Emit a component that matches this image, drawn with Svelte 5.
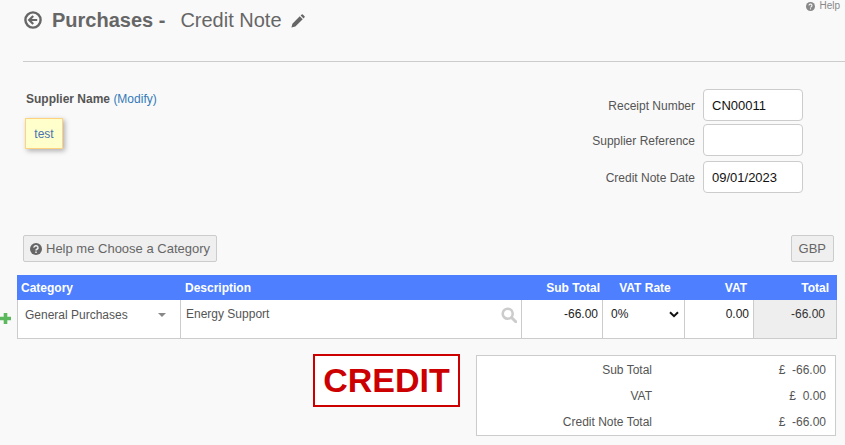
<script>
  const rows = [
    { label: 'Sub Total', value: '£  -66.00' },
    { label: 'VAT', value: '£  0.00' },
    { label: 'Credit Note Total', value: '£  -66.00' }
  ];
</script>

<div class="page">
  <a class="help" href="#help">
    <svg viewBox="0 0 16 16" width="9" height="9"><circle cx="8" cy="8" r="8" fill="#888"/><path d="M5.4 6.2a2.6 2.4 0 1 1 3.9 2.1c-.9.5-1.3.9-1.3 1.7" fill="none" stroke="#f9f9f9" stroke-width="2"/><rect x="7" y="11.2" width="2" height="2" fill="#f9f9f9"/></svg>
    Help
  </a>

  <header class="head">
    <svg class="back" viewBox="0 0 18 18" width="18" height="18">
      <circle cx="9" cy="9" r="7.6" fill="none" stroke="#666" stroke-width="2.4"/>
      <path d="M9.2 5 5.2 9l4 4M5.600 9h7.600" fill="none" stroke="#666" stroke-width="2.2"/>
    </svg>
    <h1>Purchases -</h1>
    <h2>Credit Note</h2>
    <svg class="pen" viewBox="0 0 16 16" width="14" height="14">
      <path d="M0.5 15.5 1.6 11 10 2.6 13.4 6 5 14.4Z M11 1.6 12.2.5a1 1 0 0 1 1.3 0l2 2a1 1 0 0 1 0 1.3L14.400 5Z" fill="#666"/>
    </svg>
  </header>

  <section class="info">
    <div class="supplier">
      <div class="sup-label"><b>Supplier Name</b> <a href="#modify">(Modify)</a></div>
      <div class="note">test</div>
    </div>
    <div class="fields">
      <label class="f1"><span>Receipt Number</span><input value="CN00011" /></label>
      <label class="f2"><span>Supplier Reference</span><input value="" /></label>
      <label class="f3"><span>Credit Note Date</span><input value="09/01/2023" /></label>
    </div>
  </section>

  <div class="tools">
    <button class="btn">
      <svg viewBox="0 0 16 16" width="12" height="12"><circle cx="8" cy="8" r="8" fill="#666"/><path d="M5.300 6.200a2.700 2.500 0 1 1 4 2.100c-.9.500-1.300.9-1.300 1.700" fill="none" stroke="#f0f0f0" stroke-width="2"/><rect x="7" y="11.300" width="2" height="2" fill="#f0f0f0"/></svg>
      Help me Choose a Category
    </button>
    <button class="btn gbp">GBP</button>
  </div>

  <div class="table-wrap">
    <svg class="plus" viewBox="0 0 11 11" width="11" height="11"><path d="M3.700 0h3.600v3.700H11v3.600H7.300V11H3.700V7.300H0V3.700h3.700Z" fill="#5cb85c"/></svg>
    <div class="grid thead">
      <div>Category</div>
      <div>Description</div>
      <div class="r h-sub">Sub Total</div>
      <div class="c">VAT Rate</div>
      <div class="r h-vat">VAT</div>
      <div class="r h-total">Total</div>
    </div>
    <div class="grid tbody">
      <div class="cat"><span>General Purchases</span><i class="caret"></i></div>
      <div class="desc">
        <span>Energy Support</span>
        <svg viewBox="0 0 16 16" width="16" height="16"><circle cx="6.700" cy="6.700" r="5" fill="none" stroke="#ccc" stroke-width="2.600"/><path d="m10.500 10.500 4.300 4.300" stroke="#ccc" stroke-width="3" stroke-linecap="round"/></svg>
      </div>
      <div class="r num sub">-66.00</div>
      <div class="rate">
        <span>0%</span>
        <svg viewBox="0 0 10 7" width="10" height="7"><path d="M1 1.200 5 5.200 9 1.200" fill="none" stroke="#111" stroke-width="2"/></svg>
      </div>
      <div class="r num vat">0.00</div>
      <div class="r num total">-66.00</div>
    </div>
  </div>

  <div class="bottom">
    <div class="stamp">CREDIT</div>
    <div class="summary">
      {#each rows as row}
        <div class="sum-row">
          <span class="sum-label">{row.label}</span>
          <span class="sum-val">{row.value}</span>
        </div>
      {/each}
    </div>
  </div>
</div>

<style>
  :global(body) { margin: 0; background: #f9f9f9; }
  .page {
    position: relative; width: 845px; height: 445px; overflow: hidden;
    font-family: "Liberation Sans", Arial, sans-serif; font-size: 12px; color: #555;
  }
  .help {
    position: absolute; top: 1px; right: 5px; display: flex; align-items: center; gap: 4px;
    font-size: 10px; line-height: 10px; color: #888; text-decoration: none;
  }
  .head {
    display: flex; align-items: center; height: 40px; margin-left: 23px;
    padding-bottom: 21px; border-bottom: 1px solid #ccc;
  }
  .back { margin-left: 1px; }
  h1 { margin: 0 0 0 10px; font-size: 20px; font-weight: bold; color: #666; }
  h2 { margin: 0 0 0 15px; font-size: 20px; font-weight: normal; color: #666; }
  .pen { margin: 2px 0 0 9px; }

  .info { display: flex; justify-content: space-between; height: 173px; }
  .supplier { margin: 30px 0 0 25px; }
  .sup-label { margin-left: 1px; line-height: 14px; color: #555; }
  .sup-label a { color: #337ab7; text-decoration: none; }
  .note {
    display: flex; align-items: center; justify-content: center;
    width: 36px; height: 29px; margin-top: 12px;
    background: #ffffcc; border: 1px solid #ffd27f; box-shadow: 2px 2px 5px rgba(0,0,0,.3);
    color: #4a72b0;
  }
  .fields { display: flex; flex-direction: column; margin: 27px 42px 0 0; }
  .fields label { display: flex; align-items: center; justify-content: flex-end; gap: 8px; }
  .fields span { padding-top: 2px; }
  .f2 { margin-top: 3px; }
  .f3 { margin-top: 5px; }
  input {
    width: 100px; height: 32px; box-sizing: border-box; padding: 0 8px;
    border: 1px solid #ccc; border-radius: 4px; background: #fff; outline: 0;
    font: 13px "Liberation Sans", Arial, sans-serif; color: #111;
  }

  .tools { display: flex; justify-content: space-between; margin: 0 11px 0 23px; }
  .btn {
    display: flex; align-items: center; gap: 4px; height: 27px; padding: 0 6px;
    background: #efefef; border: 1px solid #ccc; border-radius: 2px;
    font: 13px "Liberation Sans", Arial, sans-serif; color: #666;
  }
  .gbp { padding: 0 7px; }

  .table-wrap { position: relative; margin: 13px 8px 0 17px; }
  .plus { position: absolute; left: -17px; top: 38px; }
  .grid { display: grid; grid-template-columns: 164px 341px 81px 82px 69px 83px; }
  .thead {
    height: 25px; align-items: center; background: #4d7fff;
    color: #fff; font-weight: bold;
  }
  .thead > div { padding: 0 8px 0 4px; }
  .thead > .h-sub { padding-right: 3px; }
  .thead > .c { padding: 0 0 0 2px; }
  .thead > .h-vat { padding-right: 7px; }
  .tbody { height: 39px; background: #fff; border-bottom: 1px solid #ccc; box-sizing: border-box; color: #555; }
  .tbody > div { border-right: 1px solid #ccc; box-sizing: border-box; padding: 7px 5px 0; line-height: 14px; }
  .tbody > div:first-child { border-left: 1px solid #ccc; }
  .r { text-align: right; }
  .c { text-align: center; }
  .tbody > .cat { display: flex; justify-content: space-between; padding: 8px 14px 0 7px; }
  .caret {
    margin-top: 5px; width: 0; height: 0;
    border-left: 4px solid transparent; border-right: 4px solid transparent; border-top: 4px solid #888;
  }
  .desc { display: flex; justify-content: space-between; align-items: flex-start; }
  .desc svg { margin-right: -1px; }
  .num { color: #222; }
  .tbody > .sub { padding-right: 4px; }
  .tbody > .vat { padding-right: 4px; }
  .tbody > .rate { display: flex; justify-content: space-between; color: #222; padding: 7px 5px 0 8px; }
  .rate svg { margin-top: 4px; }
  .tbody > .total { background: #eee; padding-right: 11px; color: #333; }

  .bottom { display: flex; align-items: flex-start; margin: 15px 0 0 313px; }
  .stamp {
    width: 147px; height: 53px; box-sizing: border-box; display: flex; align-items: center; justify-content: center;
    border: 2px solid #c00; background: #fff; color: #c00; font-size: 34px; font-weight: bold;
  }
  .summary {
    width: 360px; height: 81px; box-sizing: border-box; margin: 1px 0 0 16px; padding-top: 1px;
    background: #fff; border: 1px solid #ccc;
  }
  .sum-row { display: flex; align-items: center; height: 26px; }
  .sum-label { width: 175px; text-align: right; }
  .sum-val { flex: 1; padding-right: 9px; text-align: right; white-space: pre; }
</style>
